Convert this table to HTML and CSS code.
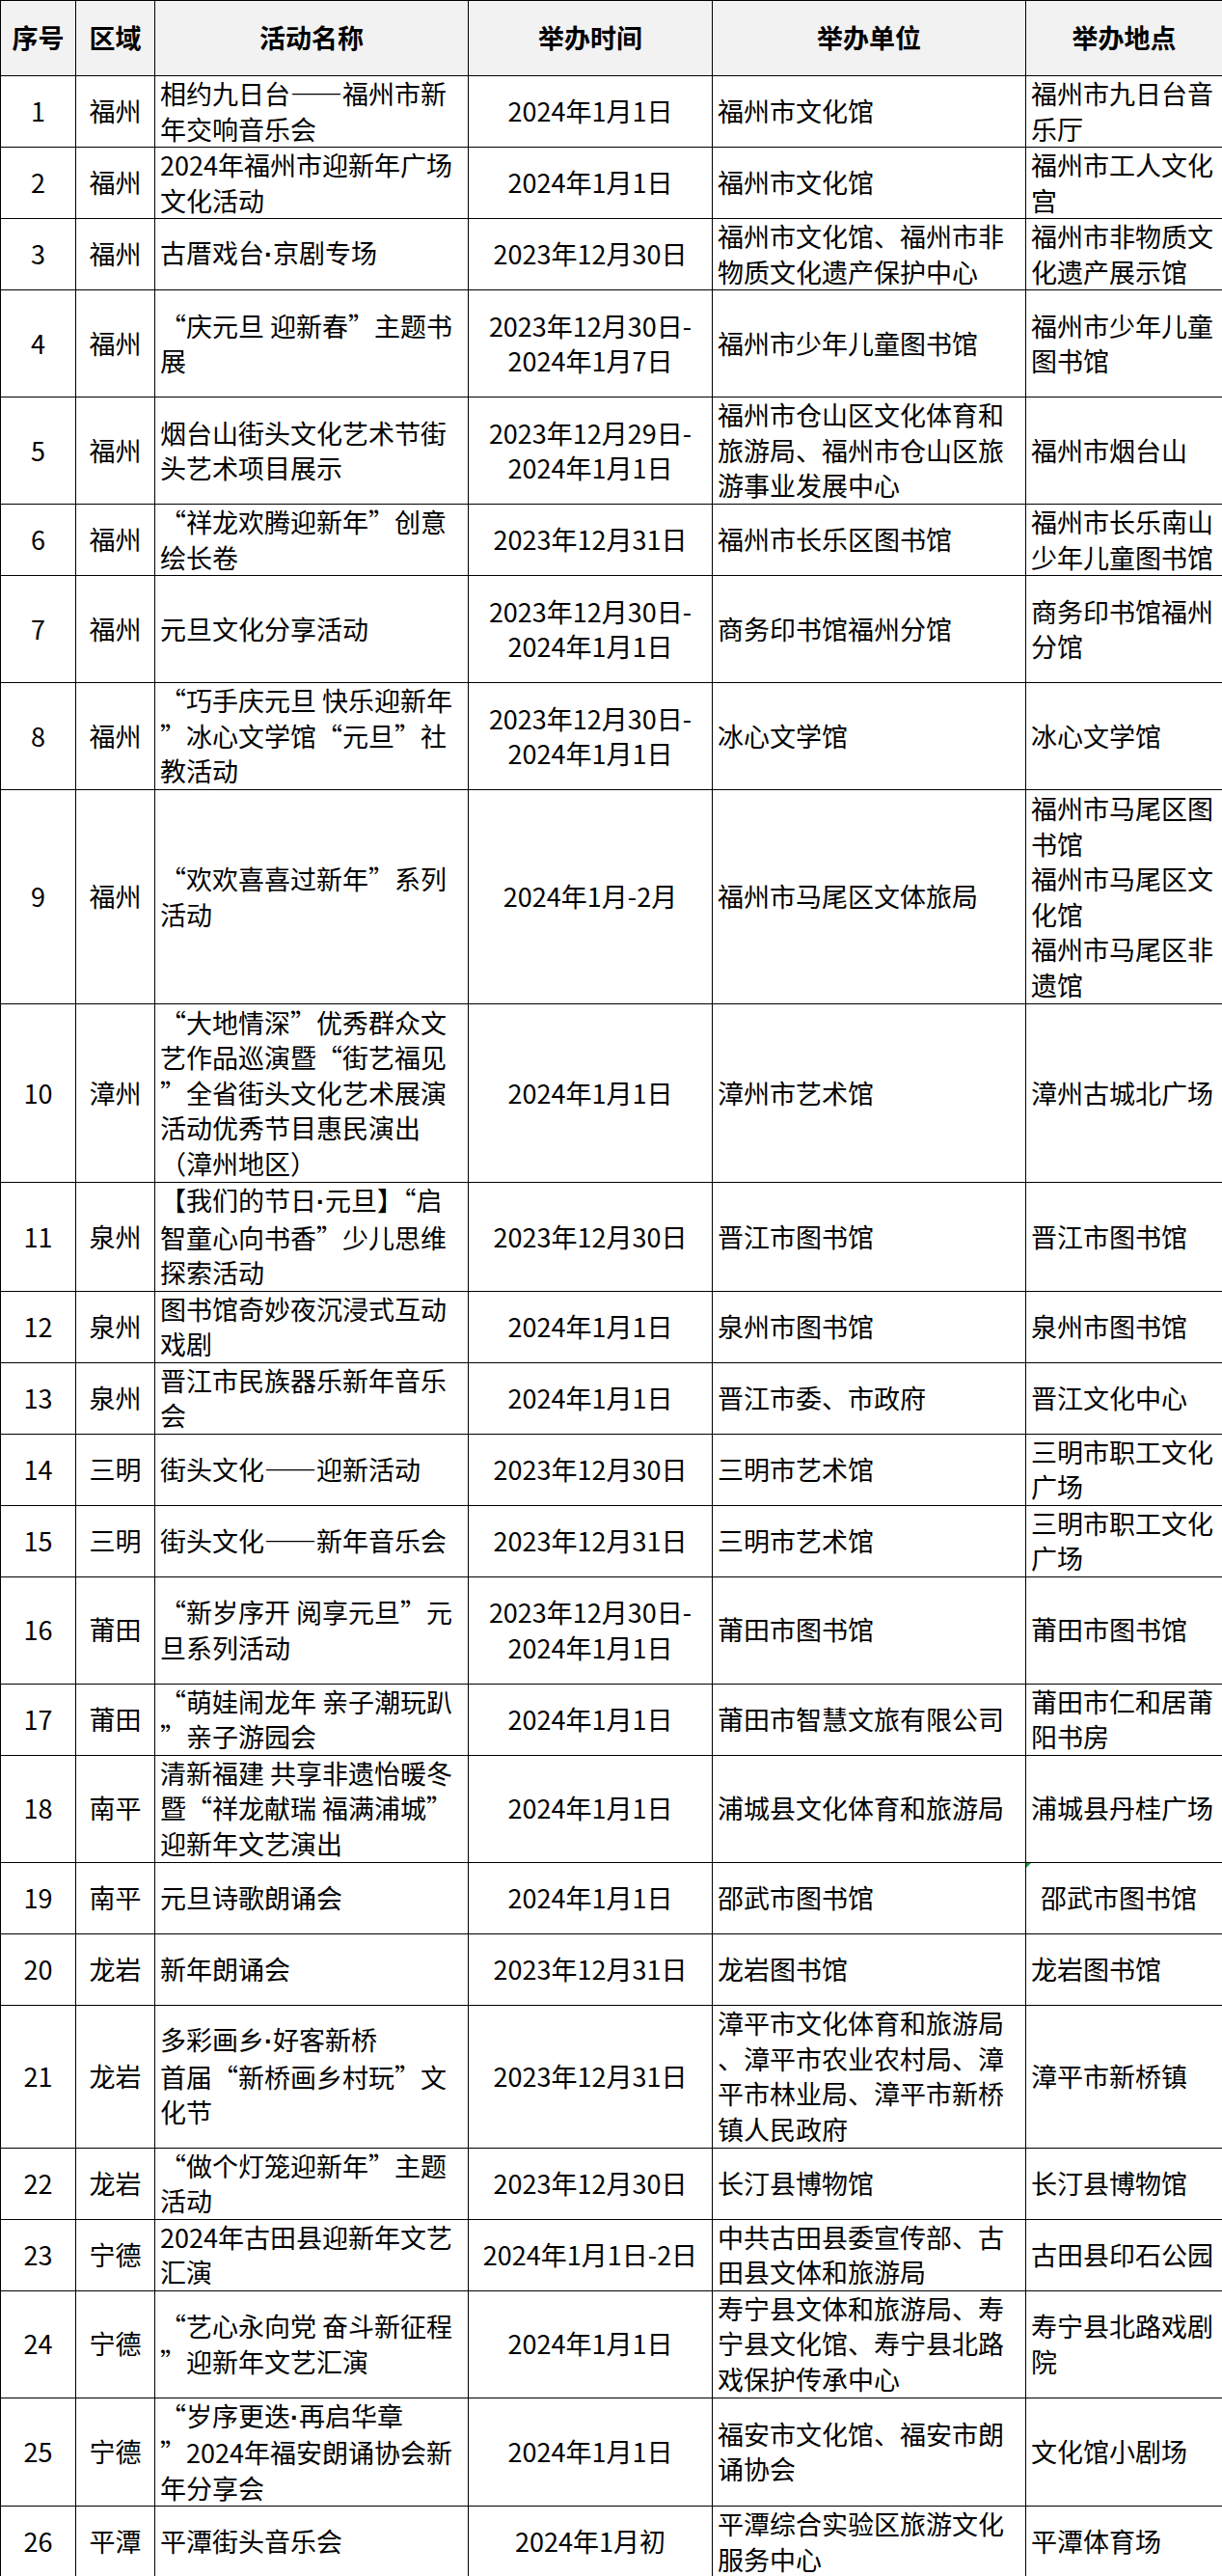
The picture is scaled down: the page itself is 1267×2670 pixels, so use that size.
FILE: index.html
```html
<!DOCTYPE html>
<html lang="zh-CN">
<head>
<meta charset="utf-8">
<title>福建省元旦文化活动一览表</title>
<link rel="stylesheet" href="styles.css">
</head>
<body>
<table class="events">
  <colgroup>
    <col class="c-no"><col class="c-area"><col class="c-name"><col class="c-time"><col class="c-org"><col class="c-place">
  </colgroup>
  <thead>
    <tr class="head">
      <th>序号</th><th>区域</th><th>活动名称</th><th>举办时间</th><th>举办单位</th><th>举办地点</th>
    </tr>
  </thead>
  <tbody>
    <tr class="u2"><td class="ctr">1</td><td class="ctr">福州</td><td>相约九日台——福州市新<br>年交响音乐会</td><td class="ctr">2024年1月1日</td><td>福州市文化馆</td><td>福州市九日台音<br>乐厅</td></tr>
    <tr class="u2"><td class="ctr">2</td><td class="ctr">福州</td><td>2024年福州市迎新年广场<br>文化活动</td><td class="ctr">2024年1月1日</td><td>福州市文化馆</td><td>福州市工人文化<br>宫</td></tr>
    <tr class="u2"><td class="ctr">3</td><td class="ctr">福州</td><td>古厝戏台<span class="dot">·</span>京剧专场</td><td class="ctr">2023年12月30日</td><td>福州市文化馆、福州市非<br>物质文化遗产保护中心</td><td>福州市非物质文<br>化遗产展示馆</td></tr>
    <tr class="u3"><td class="ctr">4</td><td class="ctr">福州</td><td>“庆元旦 迎新春”主题书<br>展</td><td class="ctr">2023年12月30日-<br>2024年1月7日</td><td>福州市少年儿童图书馆</td><td>福州市少年儿童<br>图书馆</td></tr>
    <tr class="u3"><td class="ctr">5</td><td class="ctr">福州</td><td>烟台山街头文化艺术节街<br>头艺术项目展示</td><td class="ctr">2023年12月29日-<br>2024年1月1日</td><td>福州市仓山区文化体育和<br>旅游局、福州市仓山区旅<br>游事业发展中心</td><td>福州市烟台山</td></tr>
    <tr class="u2"><td class="ctr">6</td><td class="ctr">福州</td><td>“祥龙欢腾迎新年”创意<br>绘长卷</td><td class="ctr">2023年12月31日</td><td>福州市长乐区图书馆</td><td>福州市长乐南山<br>少年儿童图书馆</td></tr>
    <tr class="u3"><td class="ctr">7</td><td class="ctr">福州</td><td>元旦文化分享活动</td><td class="ctr">2023年12月30日-<br>2024年1月1日</td><td>商务印书馆福州分馆</td><td>商务印书馆福州<br>分馆</td></tr>
    <tr class="u3"><td class="ctr">8</td><td class="ctr">福州</td><td>“巧手庆元旦 快乐迎新年<br>”冰心文学馆“元旦”社<br>教活动</td><td class="ctr">2023年12月30日-<br>2024年1月1日</td><td>冰心文学馆</td><td>冰心文学馆</td></tr>
    <tr class="u6"><td class="ctr">9</td><td class="ctr">福州</td><td>“欢欢喜喜过新年”系列<br>活动</td><td class="ctr">2024年1月-2月</td><td>福州市马尾区文体旅局</td><td>福州市马尾区图<br>书馆<br>福州市马尾区文<br>化馆<br>福州市马尾区非<br>遗馆</td></tr>
    <tr class="u5"><td class="ctr">10</td><td class="ctr">漳州</td><td>“大地情深”优秀群众文<br>艺作品巡演暨“街艺福见<br>”全省街头文化艺术展演<br>活动优秀节目惠民演出<br>（漳州地区）</td><td class="ctr">2024年1月1日</td><td>漳州市艺术馆</td><td>漳州古城北广场</td></tr>
    <tr class="u3"><td class="ctr">11</td><td class="ctr">泉州</td><td>【我们的节日<span class="dot">·</span>元旦】“启<br>智童心向书香”少儿思维<br>探索活动</td><td class="ctr">2023年12月30日</td><td>晋江市图书馆</td><td>晋江市图书馆</td></tr>
    <tr class="u2"><td class="ctr">12</td><td class="ctr">泉州</td><td>图书馆奇妙夜沉浸式互动<br>戏剧</td><td class="ctr">2024年1月1日</td><td>泉州市图书馆</td><td>泉州市图书馆</td></tr>
    <tr class="u2"><td class="ctr">13</td><td class="ctr">泉州</td><td>晋江市民族器乐新年音乐<br>会</td><td class="ctr">2024年1月1日</td><td>晋江市委、市政府</td><td>晋江文化中心</td></tr>
    <tr class="u2"><td class="ctr">14</td><td class="ctr">三明</td><td>街头文化——迎新活动</td><td class="ctr">2023年12月30日</td><td>三明市艺术馆</td><td>三明市职工文化<br>广场</td></tr>
    <tr class="u2"><td class="ctr">15</td><td class="ctr">三明</td><td>街头文化——新年音乐会</td><td class="ctr">2023年12月31日</td><td>三明市艺术馆</td><td>三明市职工文化<br>广场</td></tr>
    <tr class="u3"><td class="ctr">16</td><td class="ctr">莆田</td><td>“新岁序开 阅享元旦”元<br>旦系列活动</td><td class="ctr">2023年12月30日-<br>2024年1月1日</td><td>莆田市图书馆</td><td>莆田市图书馆</td></tr>
    <tr class="u2"><td class="ctr">17</td><td class="ctr">莆田</td><td>“萌娃闹龙年 亲子潮玩趴<br>”亲子游园会</td><td class="ctr">2024年1月1日</td><td>莆田市智慧文旅有限公司</td><td>莆田市仁和居莆<br>阳书房</td></tr>
    <tr class="u3"><td class="ctr">18</td><td class="ctr">南平</td><td>清新福建 共享非遗怡暖冬<br>暨“祥龙献瑞 福满浦城”<br>迎新年文艺演出</td><td class="ctr">2024年1月1日</td><td>浦城县文化体育和旅游局</td><td>浦城县丹桂广场</td></tr>
    <tr class="u2"><td class="ctr">19</td><td class="ctr">南平</td><td>元旦诗歌朗诵会</td><td class="ctr">2024年1月1日</td><td>邵武市图书馆</td><td class="flag lead">邵武市图书馆</td></tr>
    <tr class="u2"><td class="ctr">20</td><td class="ctr">龙岩</td><td>新年朗诵会</td><td class="ctr">2023年12月31日</td><td>龙岩图书馆</td><td>龙岩图书馆</td></tr>
    <tr class="u4"><td class="ctr">21</td><td class="ctr">龙岩</td><td>多彩画乡<span class="dot">·</span>好客新桥<br>首届“新桥画乡村玩”文<br>化节</td><td class="ctr">2023年12月31日</td><td>漳平市文化体育和旅游局<br>、漳平市农业农村局、漳<br>平市林业局、漳平市新桥<br>镇人民政府</td><td>漳平市新桥镇</td></tr>
    <tr class="u2"><td class="ctr">22</td><td class="ctr">龙岩</td><td>“做个灯笼迎新年”主题<br>活动</td><td class="ctr">2023年12月30日</td><td>长汀县博物馆</td><td>长汀县博物馆</td></tr>
    <tr class="u2"><td class="ctr">23</td><td class="ctr">宁德</td><td>2024年古田县迎新年文艺<br>汇演</td><td class="ctr">2024年1月1日-2日</td><td>中共古田县委宣传部、古<br>田县文体和旅游局</td><td>古田县印石公园</td></tr>
    <tr class="u3"><td class="ctr">24</td><td class="ctr">宁德</td><td>“艺心永向党 奋斗新征程<br>”迎新年文艺汇演</td><td class="ctr">2024年1月1日</td><td>寿宁县文体和旅游局、寿<br>宁县文化馆、寿宁县北路<br>戏保护传承中心</td><td>寿宁县北路戏剧<br>院</td></tr>
    <tr class="u3"><td class="ctr">25</td><td class="ctr">宁德</td><td>“岁序更迭<span class="dot">·</span>再启华章<br>”2024年福安朗诵协会新<br>年分享会</td><td class="ctr">2024年1月1日</td><td>福安市文化馆、福安市朗<br>诵协会</td><td>文化馆小剧场</td></tr>
    <tr class="u2"><td class="ctr">26</td><td class="ctr">平潭</td><td>平潭街头音乐会</td><td class="ctr">2024年1月初</td><td>平潭综合实验区旅游文化<br>服务中心</td><td>平潭体育场</td></tr>
  </tbody>
</table>
</body>
</html>
```

FILE: styles.css
```css
html, body {
  margin: 0;
  padding: 0;
  background: #ffffff;
}

.events {
  width: 1267px;
  table-layout: fixed;
  border-collapse: collapse;
  font-family: "Noto Sans CJK SC", "Microsoft YaHei", sans-serif;
  font-size: 27px;
  line-height: 36.5px;
  color: #000000;
}

.c-no { width: 78px; }
.c-area { width: 82px; }
.c-name { width: 325px; }
.c-time { width: 253px; }
.c-org { width: 325px; }
.c-place { width: 204px; }

.events th,
.events td {
  border: 1px solid #000000;
  padding: 0 5px;
  vertical-align: middle;
  text-align: left;
  overflow: hidden;
}

.events th {
  background: #f2f2f2;
  font-weight: 700;
  text-align: center;
}

.head { height: 78px; }
.u2 { height: 74px; }
.u3 { height: 111px; }
.u4 { height: 148px; }
.u5 { height: 185px; }
.u6 { height: 222px; }

.events td.ctr { text-align: center; }

.events td.lead { padding-left: 15px; }

.dot {
  font-family: "Liberation Sans", sans-serif;
  font-weight: 700;
}

.events td.flag { position: relative; }
.events td.flag::before {
  content: "";
  position: absolute;
  top: 0;
  left: 0;
  width: 0;
  height: 0;
  border-top: 5px solid #1f9a3a;
  border-right: 5px solid transparent;
}
```
